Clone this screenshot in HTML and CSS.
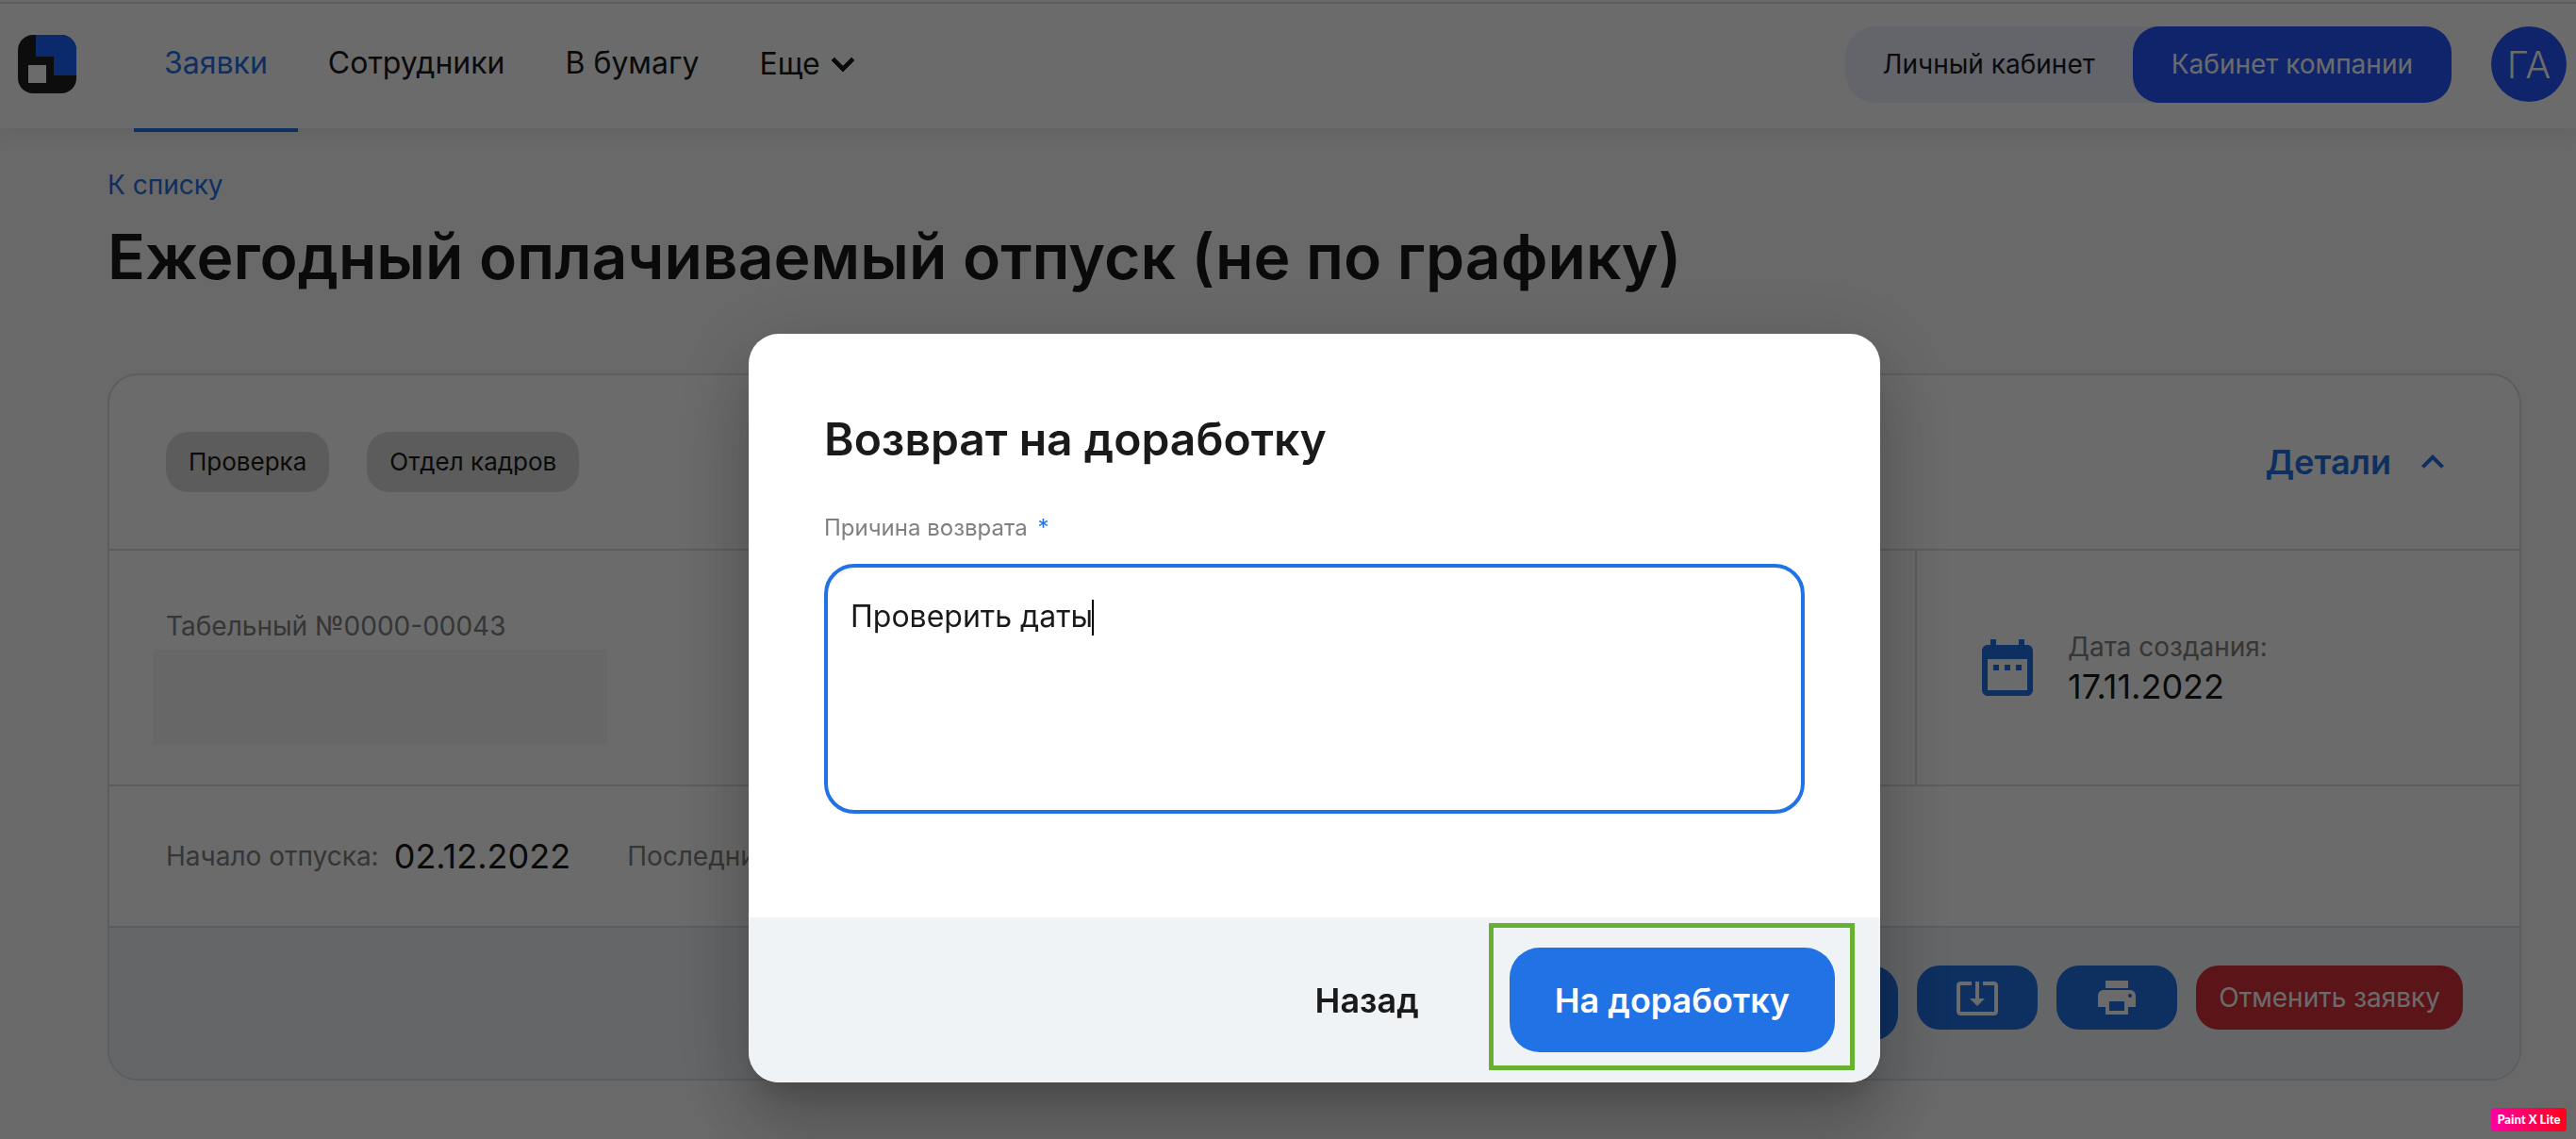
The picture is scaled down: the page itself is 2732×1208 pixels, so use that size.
FILE: index.html
```html
<!DOCTYPE html>
<html lang="ru">
<head>
<meta charset="utf-8">
<title>Ежегодный оплачиваемый отпуск</title>
<link rel="stylesheet" href="styles.css">
</head>
<body>
<header class="header">
  <a class="logo" href="#" aria-label="Главная">
    <svg viewBox="0 0 62 62" width="62" height="62" aria-hidden="true">
      <clipPath id="logo-shape"><rect width="62" height="62" rx="16"/></clipPath>
      <g clip-path="url(#logo-shape)">
        <rect width="62" height="62" fill="#202020"/>
        <path d="M19 0H62V43H38V23H19Z" fill="#1a64ff"/>
        <rect x="11" y="32" width="19" height="19" fill="#fff"/>
      </g>
    </svg>
  </a>
  <nav class="nav">
    <a class="nav-link nav-link-active" href="#">Заявки</a>
    <a class="nav-link" href="#">Сотрудники</a>
    <a class="nav-link" href="#">В бумагу</a>
    <button class="nav-link nav-more" type="button">Еще
      <svg viewBox="0 0 24 24" width="48" height="48" aria-hidden="true"><path d="M7.41 8.59 12 13.17l4.59-4.58L18 10l-6 6-6-6z" stroke="currentColor" stroke-width=".5"/></svg>
    </button>
  </nav>
  <div class="switch">
    <button class="switch-item" type="button">Личный кабинет</button>
    <button class="switch-item switch-item-active" type="button">Кабинет компании</button>
  </div>
  <button class="avatar" type="button">ГА</button>
</header>

<main class="page">
  <a class="back-link" href="#">К списку</a>
  <h1 class="page-title">Ежегодный оплачиваемый отпуск (не по графику)</h1>

  <section class="card">
    <div class="card-row card-top">
      <span class="chip">Проверка</span>
      <span class="chip">Отдел кадров</span>
      <button class="details" type="button">Детали
        <svg viewBox="0 0 24 24" width="48" height="48" aria-hidden="true"><path d="M12 8l-6 6 1.41 1.41L12 10.83l4.59 4.58L18 14z"/></svg>
      </button>
    </div>
    <div class="card-row card-info">
      <div class="employee">
        <span class="label">Табельный №0000-00043</span>
        <span class="employee-name"></span>
      </div>
      <div class="created">
        <svg class="created-icon" viewBox="0 0 24 24" width="72" height="72" aria-hidden="true"><path d="M9 11H7v2h2v-2zm4 0h-2v2h2v-2zm4 0h-2v2h2v-2zm2-7h-1V2h-2v2H8V2H6v2H5c-1.11 0-1.99.9-1.99 2L3 20c0 1.1.89 2 2 2h14c1.1 0 2-.9 2-2V6c0-1.1-.9-2-2-2zm0 16H5V9h14v11z"/></svg>
        <div class="created-text">
          <span class="label">Дата создания:</span>
          <span class="value">17.11.2022</span>
        </div>
      </div>
    </div>
    <div class="card-row card-dates">
      <div class="pair"><span class="label">Начало отпуска:</span><span class="value">02.12.2022</span></div>
      <div class="pair"><span class="label">Последний день:</span></div>
    </div>
    <div class="card-actions">
      <button class="action action-main" type="button" aria-label="Согласовать"></button>
      <button class="action" type="button" aria-label="Скачать">
        <svg viewBox="0 0 24 24" width="48" height="48" aria-hidden="true"><path d="M12 16.5l4-4h-3v-9h-2v9H8l4 4zm9-13h-6v1.99h6v14.03H3V5.49h6V3.5H3c-1.1 0-2 .9-2 2v14c0 1.1.9 2 2 2h18c1.1 0 2-.9 2-2v-14c0-1.1-.9-2-2-2z"/></svg>
      </button>
      <button class="action" type="button" aria-label="Печать">
        <svg viewBox="0 0 24 24" width="48" height="48" aria-hidden="true"><path d="M19 8H5c-1.66 0-3 1.34-3 3v6h4v4h12v-4h4v-6c0-1.66-1.34-3-3-3zm-3 11H8v-5h8v5zm3-7c-.55 0-1-.45-1-1s.45-1 1-1 1 .45 1 1-.45 1-1 1zm-1-9H6v4h12V3z"/></svg>
      </button>
      <button class="action action-cancel" type="button">Отменить заявку</button>
    </div>
  </section>
</main>

<div class="overlay">
  <form class="modal" role="dialog" aria-labelledby="modal-title">
    <div class="modal-body">
      <h2 class="modal-title" id="modal-title">Возврат на доработку</h2>
      <label class="modal-label" for="reason">Причина возврата <span class="required">*</span></label>
      <div class="field">
        <textarea class="reason" id="reason">Проверить даты</textarea>
        <span class="caret"></span>
      </div>
    </div>
    <div class="modal-footer">
      <button class="modal-button" type="button">Назад</button>
      <div class="highlight">
        <button class="modal-button modal-button-primary" type="button">На доработку</button>
      </div>
    </div>
  </form>
</div>
<div class="badge">Paint X Lite</div>
</body>
</html>
```
FILE: styles.css
```css
:root {
  --blue: #2172e5;
  --brand: #2857ff;
  --ink: #1a1a1a;
  --muted: #808080;
  --line: #d9e1e8;
  --soft: #eff3f6;
}

* { box-sizing: border-box; }

body {
  margin: 0;
  min-height: 100vh;
  overflow: hidden;
  background: #fafafa;
  color: var(--ink);
  font-family: Inter, "Liberation Sans", sans-serif;
  font-size: 28px;
}

a { color: inherit; text-decoration: none; }
svg { display: block; flex: none; fill: currentColor; }

button {
  margin: 0;
  padding: 0;
  border: 0;
  background: none;
  color: inherit;
  font: inherit;
  white-space: nowrap;
}

/* Header */
.header {
  display: flex;
  align-items: center;
  height: 136px;
  padding: 0 10px 0 19px;
  background: linear-gradient(#dcdcdc, #dcdcdc) 0 2px / 100% 2px no-repeat #fff;
  box-shadow: 0 4px 24px rgba(0, 0, 0, .08);
}

.nav { display: flex; flex: 1; margin-left: 61px; }

.nav-link {
  height: 136px;
  padding: 0 32px;
  font-size: 32px;
  line-height: 134px;
}

.nav-link-active {
  color: var(--blue);
  box-shadow: 0 4px 0 var(--blue);
}

.nav-more { display: flex; align-items: center; }

.switch {
  display: flex;
  border-radius: 32px;
  background: #ecf1ff;
}

.switch-item {
  height: 81px;
  padding: 0 40px;
  border-radius: 28px;
}

.switch-item-active { padding: 0 41px; background: var(--brand); color: #fff; }

.avatar {
  width: 80px;
  height: 80px;
  margin-left: 42px;
  border-radius: 50%;
  background: var(--brand);
  color: #fff;
  font-size: 40px;
  font-weight: 300;
}

/* Page */
.page { padding: 40px 58px 60px 114px; }

.back-link { color: var(--blue); line-height: 40px; }

.page-title {
  margin: 16px 0 84px;
  font-size: 66px;
  font-weight: 600;
  line-height: 80px;
}

.card {
  overflow: hidden;
  border: 2px solid var(--line);
  border-radius: 32px;
  background: #fff;
}

.card-row {
  display: flex;
  align-items: center;
  border-bottom: 2px solid var(--line);
}

.card-top { gap: 40px; height: 186px; padding: 0 68px 0 60px; }

.chip {
  padding: 0 24px;
  border-radius: 24px;
  background: #dcdcdc;
  font-size: 26px;
  line-height: 64px;
}

.details {
  display: flex;
  align-items: center;
  gap: 20px;
  margin-left: auto;
  color: var(--blue);
  font-size: 36px;
  font-weight: 600;
}

.label { color: var(--muted); line-height: 40px; }
.value { font-size: 36px; line-height: 44px; }

.card-info { align-items: stretch; height: 250px; }

.employee {
  display: flex;
  flex: 1;
  flex-direction: column;
  padding: 60px 44px 0 46px;
}

.employee .label { padding-left: 14px; }

.employee-name {
  width: 482px;
  height: 101px;
  margin-top: 5px;
  background: #f6f6f6;
}

.created {
  display: flex;
  align-items: center;
  gap: 28px;
  width: 641px;
  padding-left: 60px;
  border-left: 2px solid var(--line);
}

.created-icon { color: var(--blue); }
.created-text { display: flex; flex-direction: column; }

.card-dates { gap: 60px; height: 150px; padding: 0 60px; }
.pair { display: flex; align-items: center; gap: 16px; }

.card-actions {
  display: flex;
  align-items: flex-start;
  justify-content: flex-end;
  gap: 20px;
  padding: 40px 60px;
  background: var(--soft);
}

.action {
  display: flex;
  align-items: center;
  justify-content: center;
  width: 128px;
  height: 68px;
  border-radius: 24px;
  background: var(--blue);
  color: #fff;
}

.action-main { width: 240px; height: 80px; border-radius: 28px; }
.action-cancel { width: auto; padding: 0 24px; background: #d9323a; }

/* Dialog */
.overlay {
  position: fixed;
  inset: 0;
  display: flex;
  align-items: flex-start;
  justify-content: center;
  padding: 354px 0 0 56px;
  background: rgba(0, 0, 0, .58);
}

.modal {
  width: 1200px;
  overflow: hidden;
  border-radius: 32px;
  background: #fff;
  box-shadow:
    0 22px 30px -14px rgba(0, 0, 0, .2),
    0 48px 76px 6px rgba(0, 0, 0, .14),
    0 18px 92px 16px rgba(0, 0, 0, .12);
}

.modal-body { padding: 80px 80px 110px; }

.modal-title {
  margin: 0 0 46px;
  font-size: 48px;
  font-weight: 600;
  line-height: 64px;
}

.modal-label {
  display: block;
  margin-bottom: 22px;
  color: var(--muted);
  font-size: 24px;
  line-height: 32px;
}

.required { margin-left: 4px; color: var(--blue); }

.field { position: relative; }

.reason {
  display: block;
  width: 100%;
  height: 265px;
  padding: 32px 24px;
  border: 4px solid var(--blue);
  border-radius: 32px;
  outline: 0;
  background: #fff;
  color: inherit;
  font: inherit;
  font-size: 32px;
  line-height: 40px;
  resize: none;
}

.caret {
  position: absolute;
  top: 38px;
  left: 284px;
  width: 2px;
  height: 38px;
  background: #000;
}

.modal-footer {
  display: flex;
  align-items: center;
  justify-content: flex-end;
  padding: 32px 48px;
  background: var(--soft);
}

.modal-button {
  height: 111px;
  padding: 0 48px;
  border-radius: 32px;
  font-size: 36px;
  font-weight: 600;
}

.modal-button-primary { background: var(--blue); color: #fff; }

.highlight { position: relative; margin-left: 48px; }

.highlight::after {
  content: "";
  position: absolute;
  inset: -26px -21px -19px -22px;
  border: 5px solid #66b132;
}

.badge {
  position: fixed;
  right: 10px;
  bottom: 8px;
  width: 80px;
  border-radius: 4px;
  background: linear-gradient(90deg, #ff00a2, #ff0018);
  color: #fff;
  font: 900 13px/25px Lato, sans-serif;
  text-align: center;
}
```
